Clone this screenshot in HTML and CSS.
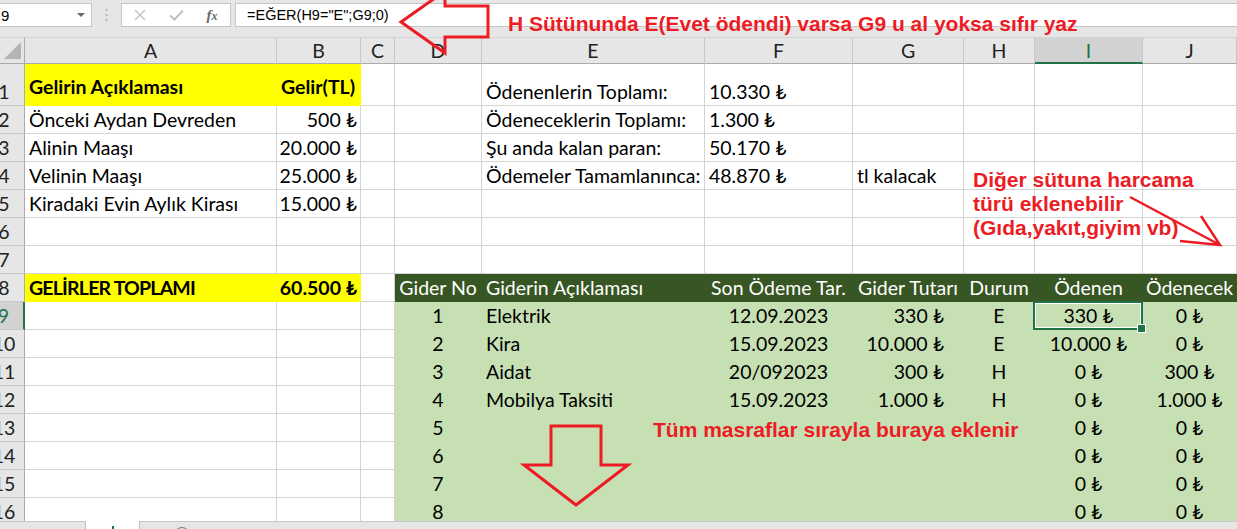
FILE: index.html
```html
<!DOCTYPE html>
<html lang="tr">
<head>
<meta charset="utf-8">
<title>Gelir Gider</title>
<link rel="stylesheet" href="styles.css">
</head>
<body>
<div class="fbar">
  <div class="namebox"><span>9</span><span class="caret"></span></div>
  <div class="grip"><svg width="3" height="12" viewBox="0 0 3 12"><rect x="0.5" y="0" width="2" height="2" fill="#b3b3b3"/><rect x="0.5" y="5" width="2" height="2" fill="#b3b3b3"/><rect x="0.5" y="10" width="2" height="2" fill="#b3b3b3"/></svg></div>
  <div class="btns">
    <div class="btn"><svg width="12" height="12" viewBox="0 0 12 12"><path d="M1 1L11 11M11 1L1 11" stroke="#c2c2c2" stroke-width="1.4" fill="none"/></svg></div>
    <div class="btn"><svg width="15" height="12" viewBox="0 0 15 12"><path d="M1 6.5L5.5 10.5L14 1.5" stroke="#c2c2c2" stroke-width="2.2" fill="none"/></svg></div>
    <div class="btn"><span class="fx">f<span class="fxx">x</span></span></div>
  </div>
  <div class="formula">=EĞER(H9="E";G9;0)</div>
</div>

<div class="sheet">
  <div class="grid">
    <!-- header row -->
    <div class="corner"><svg width="17" height="17" viewBox="0 0 17 17"><path d="M17 0V17H0Z" fill="#b4b4b4"/></svg></div>
    <div class="ch">A</div><div class="ch">B</div><div class="ch">C</div><div class="ch">D</div><div class="ch">E</div><div class="ch">F</div><div class="ch">G</div><div class="ch">H</div><div class="ch hs">I</div><div class="ch">J</div>

    <!-- row 1 -->
    <div class="rh b">1</div>
    <div class="c y y1">Gelirin Açıklaması</div>
    <div class="c y y1">Gelir(TL)</div>
    <div class="c"></div><div class="c"></div>
    <div class="c b">Ödenenlerin Toplamı:</div>
    <div class="c b">10.330 ₺</div>
    <div class="c"></div><div class="c"></div><div class="c"></div><div class="c"></div>

    <!-- row 2 -->
    <div class="rh">2</div>
    <div class="c">Önceki Aydan Devreden</div>
    <div class="c r">500 ₺</div>
    <div class="c"></div><div class="c"></div>
    <div class="c">Ödeneceklerin Toplamı:</div>
    <div class="c">1.300 ₺</div>
    <div class="c"></div><div class="c"></div><div class="c"></div><div class="c"></div>

    <!-- row 3 -->
    <div class="rh">3</div>
    <div class="c">Alinin Maaşı</div>
    <div class="c r">20.000 ₺</div>
    <div class="c"></div><div class="c"></div>
    <div class="c">Şu anda kalan paran:</div>
    <div class="c">50.170 ₺</div>
    <div class="c"></div><div class="c"></div><div class="c"></div><div class="c"></div>

    <!-- row 4 -->
    <div class="rh">4</div>
    <div class="c">Velinin Maaşı</div>
    <div class="c r">25.000 ₺</div>
    <div class="c"></div><div class="c"></div>
    <div class="c">Ödemeler Tamamlanınca:</div>
    <div class="c">48.870 ₺</div>
    <div class="c">tl kalacak</div>
    <div class="c"></div><div class="c"></div><div class="c"></div>

    <!-- row 5 -->
    <div class="rh">5</div>
    <div class="c">Kiradaki Evin Aylık Kirası</div>
    <div class="c r">15.000 ₺</div>
    <div class="c"></div><div class="c"></div><div class="c"></div><div class="c"></div><div class="c"></div><div class="c"></div><div class="c"></div><div class="c"></div>

    <!-- row 6 -->
    <div class="rh">6</div>
    <div class="c"></div><div class="c"></div><div class="c"></div><div class="c"></div><div class="c"></div><div class="c"></div><div class="c"></div><div class="c"></div><div class="c"></div><div class="c"></div>

    <!-- row 7 -->
    <div class="rh">7</div>
    <div class="c"></div><div class="c"></div><div class="c"></div><div class="c"></div><div class="c"></div><div class="c"></div><div class="c"></div><div class="c"></div><div class="c"></div><div class="c"></div>

    <!-- row 8 -->
    <div class="rh">8</div>
    <div class="c y caps">GELİRLER TOPLAMI</div>
    <div class="c y r">60.500 ₺</div>
    <div class="c"></div>
    <div class="c gh m">Gider No</div>
    <div class="c gh">Giderin Açıklaması</div>
    <div class="c gh m">Son Ödeme Tar.</div>
    <div class="c gh m">Gider Tutarı</div>
    <div class="c gh m">Durum</div>
    <div class="c gh m">Ödenen</div>
    <div class="c gh m">Ödenecek</div>

    <!-- row 9 -->
    <div class="rh hs">9</div>
    <div class="c"></div><div class="c"></div><div class="c"></div>
    <div class="c gd m">1</div>
    <div class="c gd">Elektrik</div>
    <div class="c gd m">12.09.2023</div>
    <div class="c gd gr">330 ₺</div>
    <div class="c gd m">E</div>
    <div class="c gd m cur">330 ₺</div>
    <div class="c gd m">0 ₺</div>

    <!-- row 10 -->
    <div class="rh">10</div>
    <div class="c"></div><div class="c"></div><div class="c"></div>
    <div class="c gd m">2</div>
    <div class="c gd">Kira</div>
    <div class="c gd m">15.09.2023</div>
    <div class="c gd gr">10.000 ₺</div>
    <div class="c gd m">E</div>
    <div class="c gd m">10.000 ₺</div>
    <div class="c gd m">0 ₺</div>

    <!-- row 11 -->
    <div class="rh">11</div>
    <div class="c"></div><div class="c"></div><div class="c"></div>
    <div class="c gd m">3</div>
    <div class="c gd">Aidat</div>
    <div class="c gd m">20/092023</div>
    <div class="c gd gr">300 ₺</div>
    <div class="c gd m">H</div>
    <div class="c gd m">0 ₺</div>
    <div class="c gd m">300 ₺</div>

    <!-- row 12 -->
    <div class="rh">12</div>
    <div class="c"></div><div class="c"></div><div class="c"></div>
    <div class="c gd m">4</div>
    <div class="c gd">Mobilya Taksiti</div>
    <div class="c gd m">15.09.2023</div>
    <div class="c gd gr">1.000 ₺</div>
    <div class="c gd m">H</div>
    <div class="c gd m">0 ₺</div>
    <div class="c gd m">1.000 ₺</div>

    <!-- row 13 -->
    <div class="rh">13</div>
    <div class="c"></div><div class="c"></div><div class="c"></div>
    <div class="c gd m">5</div>
    <div class="c gd"></div><div class="c gd"></div><div class="c gd"></div><div class="c gd"></div>
    <div class="c gd m">0 ₺</div>
    <div class="c gd m">0 ₺</div>

    <!-- row 14 -->
    <div class="rh">14</div>
    <div class="c"></div><div class="c"></div><div class="c"></div>
    <div class="c gd m">6</div>
    <div class="c gd"></div><div class="c gd"></div><div class="c gd"></div><div class="c gd"></div>
    <div class="c gd m">0 ₺</div>
    <div class="c gd m">0 ₺</div>

    <!-- row 15 -->
    <div class="rh">15</div>
    <div class="c"></div><div class="c"></div><div class="c"></div>
    <div class="c gd m">7</div>
    <div class="c gd"></div><div class="c gd"></div><div class="c gd"></div><div class="c gd"></div>
    <div class="c gd m">0 ₺</div>
    <div class="c gd m">0 ₺</div>

    <!-- row 16 -->
    <div class="rh">16</div>
    <div class="c"></div><div class="c"></div><div class="c"></div>
    <div class="c gd m">8</div>
    <div class="c gd"></div><div class="c gd"></div><div class="c gd"></div><div class="c gd"></div>
    <div class="c gd m">0 ₺</div>
    <div class="c gd m">0 ₺</div>
  </div>
</div>

<div class="tabs">
  <div class="tnav"></div>
  <div class="tact"><span></span></div>
  <div class="tadd"><div class="plus"></div></div>
</div>

<svg class="ink" width="1237" height="529" viewBox="0 0 1237 529">
  <path d="M401 22L445 -9V6H488V37H445V53Z" fill="none" stroke="#ed1c24" stroke-width="3"/>
  <path d="M551 426H601V465H628L576 505L524 465H551Z" fill="none" stroke="#ed1c24" stroke-width="3"/>
  <path d="M1130 197L1220 245M1201 216L1220 245L1180 241" fill="none" stroke="#ed1c24" stroke-width="2.5"/>
</svg>
<div class="ann ann1">H Sütünunda E(Evet ödendi) varsa G9 u al yoksa sıfır yaz</div>
<div class="ann ann2">Diğer sütuna harcama<br>türü eklenebilir<br>(Gıda,yakıt,giyim vb)</div>
<div class="ann ann3">Tüm masraflar sırayla buraya eklenir</div>
</body>
</html>
```

FILE: styles.css
```css
* { box-sizing: border-box; margin: 0; padding: 0; }
html, body { width: 1237px; height: 529px; overflow: hidden; }
body { position: relative; background: #e6e6e6; font-family: Lato, "Noto Sans", sans-serif; color: #000; }

/* formula bar */
.fbar { height: 37px; display: flex; align-items: flex-start; padding-top: 3px; font-family: "Liberation Sans", Arial, sans-serif; }
.namebox { width: 93px; height: 24px; margin-left: -1px; background: #fff; border: 1px solid #c6c6c6; display: flex; align-items: center; justify-content: space-between; padding: 0 6px 0 1px; font-size: 15px; }
.caret { width: 0; height: 0; border-left: 4px solid transparent; border-right: 4px solid transparent; border-top: 4px solid #6a6a6a; }
.grip { width: 29px; height: 24px; display: flex; align-items: center; justify-content: center; }
.btns { width: 110px; height: 24px; background: #fff; border: 1px solid #c6c6c6; display: flex; }
.btn { width: 36px; display: flex; align-items: center; justify-content: center; }
.fx { font: italic bold 15px "Liberation Serif", serif; color: #6a6a6a; }
.fxx { font-size: 12px; }
.formula { flex: 1; height: 24px; margin-left: 4px; margin-right: -2px; background: #fff; border: 1px solid #c6c6c6; display: flex; align-items: center; padding-left: 11px; font-size: 14.5px; color: #000; }

/* sheet grid */
.sheet { height: 484px; overflow: hidden; }
.grid { display: grid; width: 1253px; margin-left: -16px;
  grid-template-columns: 41px 252px 84px 34px 87px 223px 148px 111px 71px 108px 94px;
  grid-template-rows: 27px 42px repeat(15, 28px); }

.corner { background: #e6e6e6; border-top: 1px solid #d4d4d4; border-right: 1px solid #ababab; border-bottom: 1px solid #ababab; display: flex; justify-content: flex-end; align-items: flex-end; padding: 0 3px 4px 0; }
.ch { background: #e6e6e6; border-top: 1px solid #d4d4d4; border-right: 1px solid #c8c8c8; border-bottom: 1px solid #ababab; display: flex; align-items: center; justify-content: center; font-size: 19.5px; color: #222; }
.rh { background: #e6e6e6; border-right: 1px solid #ababab; border-bottom: 1px solid #c8c8c8; display: flex; align-items: center; justify-content: center; font-size: 19.5px; color: #222; }
.ch.hs { background: #d2d2d2; border-bottom: 2px solid #217346; color: #217346; }
.rh.hs { background: #d2d2d2; border-right: 2px solid #217346; color: #217346; }

.c { background: #fff; border-right: 1px solid #d4d4d4; border-bottom: 1px solid #d4d4d4; display: flex; align-items: center; padding: 0 4px; font-size: 19.5px; white-space: nowrap; }
.b { align-items: flex-end; padding-bottom: 2px; }
.r { justify-content: flex-end; padding-right: 3px; }
.m { justify-content: center; }
.gr { justify-content: flex-end; padding-right: 19px; }
.y { background: #ffff00; border-color: #ffff00; font-weight: 700; }
.y1 { padding-top: 4px; }
.caps { letter-spacing: -0.8px; }
.gh { background: #375623; border-color: #375623; color: #fff; }
.gd { background: #c6e0b4; border-color: #c6e0b4; }

/* active cell */
.cur { position: relative; }
.cur::before { content: ""; position: absolute; left: -2px; top: -1px; right: -1px; bottom: -1px; border: 2px solid #217346; box-shadow: inset 0 0 0 1px #fff; }
.cur::after { content: ""; position: absolute; width: 7px; height: 7px; right: -4px; bottom: -4px; background: #217346; border: 1px solid #fff; }

/* sheet tabs */
.tabs { height: 8px; display: flex; }
.tnav { width: 86px; border-top: 1px solid #c6c6c6; border-right: 1px solid #bdbdbd; background: #e6e6e6; }
.tact { width: 53px; background: #fff; display: flex; justify-content: center; padding-top: 5px; }
.tact span { width: 2px; height: 3px; background: #217346; }
.tadd { flex: 1; border-top: 1px solid #c6c6c6; border-left: 1px solid #bdbdbd; background: #e6e6e6; padding: 5px 0 0 34px; }
.plus { width: 16px; height: 16px; border: 1px solid #7a7a7a; border-radius: 50%; }

/* red annotations */
.ink { position: absolute; left: 0; top: 0; }
.ann { position: absolute; color: #ed1c24; font: bold 21px/24px "Liberation Sans", Arial, sans-serif; white-space: nowrap; }
.ann1 { left: 508px; top: 12px; }
.ann2 { left: 973px; top: 168px; }
.ann3 { left: 653px; top: 418px; }
```
